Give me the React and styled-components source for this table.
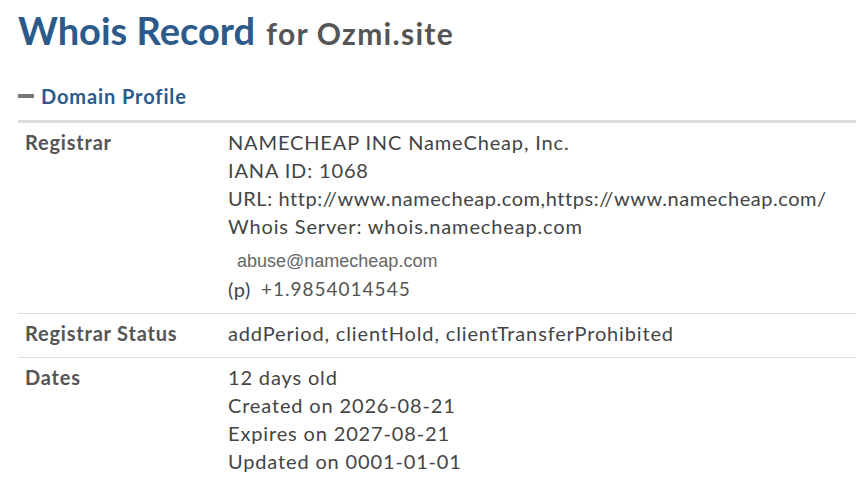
import React from "react";
import styled, { createGlobalStyle } from "styled-components";

const Global = createGlobalStyle`
  html, body { margin: 0; padding: 0; background: #fff; }
  body { font-family: Lato, "Open Sans", sans-serif; overflow: hidden; }
`;

const Page = styled.div`
  padding: 7px 0 0 18px;
`;

const Title = styled.h1`
  margin: 0;
  font-family: Lato, sans-serif;
  font-weight: 700;
  font-size: 38px;
  line-height: 46px;
  color: #2b5a8b;
  white-space: nowrap;
`;

const Sub = styled.span`
  font-size: 30px;
  letter-spacing: 1.3px;
  color: #555;
  margin-left: 2px;
`;

const SectionHead = styled.div`
  display: flex;
  align-items: center;
  gap: 7px;
  margin-top: 27px;
  height: 26px;
  font-size: 20px;
  letter-spacing: 0.9px;
  font-weight: 700;
  color: #2b5a8b;
`;

const Dash = styled.span`
  display: inline-block;
  width: 16px;
  height: 4px;
  background: #777;
`;

const Table = styled.div`
  margin-top: 11px;
  border-top: 3px solid #ddd;
  display: grid;
  grid-template-columns: 203px 1fr;
`;

const Cell = styled.div`
  padding: 5px 7px 10px 7px;
  font-size: 20px;
  line-height: 28px;
  border-bottom: ${(p) => (p.$last ? "none" : "1px solid #ddd")};
  white-space: nowrap;
`;

const Label = styled(Cell)`
  font-weight: 700;
  letter-spacing: 0.8px;
  color: #555;
`;

const Value = styled(Cell)`
  color: #444;
  letter-spacing: 0.85px;
`;

const Line = styled.div`
  letter-spacing: ${(p) => (p.$tight ? "0.55px" : "inherit")};
`;

const Contact = styled.div`
  display: flex;
  align-items: center;
  gap: 10px;
  height: 28px;
  margin-top: ${(p) => p.$gap || 0}px;
  padding-left: ${(p) => p.$indent || 0}px;
`;

const Email = styled.span`
  font-family: "Liberation Sans", Arial, sans-serif;
  font-size: 18px;
  letter-spacing: 0;
  color: #666;
`;

const Phone = styled.span`
  font-size: 19px;
  color: #555;
  letter-spacing: 1px;
`;

const P = styled.span`
  font-size: 20px;
  color: #444;
  letter-spacing: 0.6px;
`;

export default function App() {
  return (
    <Page>
      <Global />
      <Title>
        Whois Record <Sub>for Ozmi.site</Sub>
      </Title>
      <SectionHead>
        <Dash />
        Domain Profile
      </SectionHead>
      <Table>
        <Label>Registrar</Label>
        <Value>
          <Line>NAMECHEAP INC NameCheap, Inc.</Line>
          <Line>IANA ID: 1068</Line>
          <Line $tight>URL: http://www.namecheap.com,https://www.namecheap.com/</Line>
          <Line>Whois Server: whois.namecheap.com</Line>
          <Contact $indent={9} $gap={7}>
            <Email>abuse@namecheap.com</Email>
          </Contact>
          <Contact>
            <P>(p)</P>
            <Phone>+1.9854014545</Phone>
          </Contact>
        </Value>
        <Label>Registrar Status</Label>
        <Value>addPeriod, clientHold, clientTransferProhibited</Value>
        <Label $last>Dates</Label>
        <Value $last>
          <Line>12 days old</Line>
          <Line>Created on 2026-08-21</Line>
          <Line>Expires on 2027-08-21</Line>
          <Line>Updated on 0001-01-01</Line>
        </Value>
      </Table>
    </Page>
  );
}
